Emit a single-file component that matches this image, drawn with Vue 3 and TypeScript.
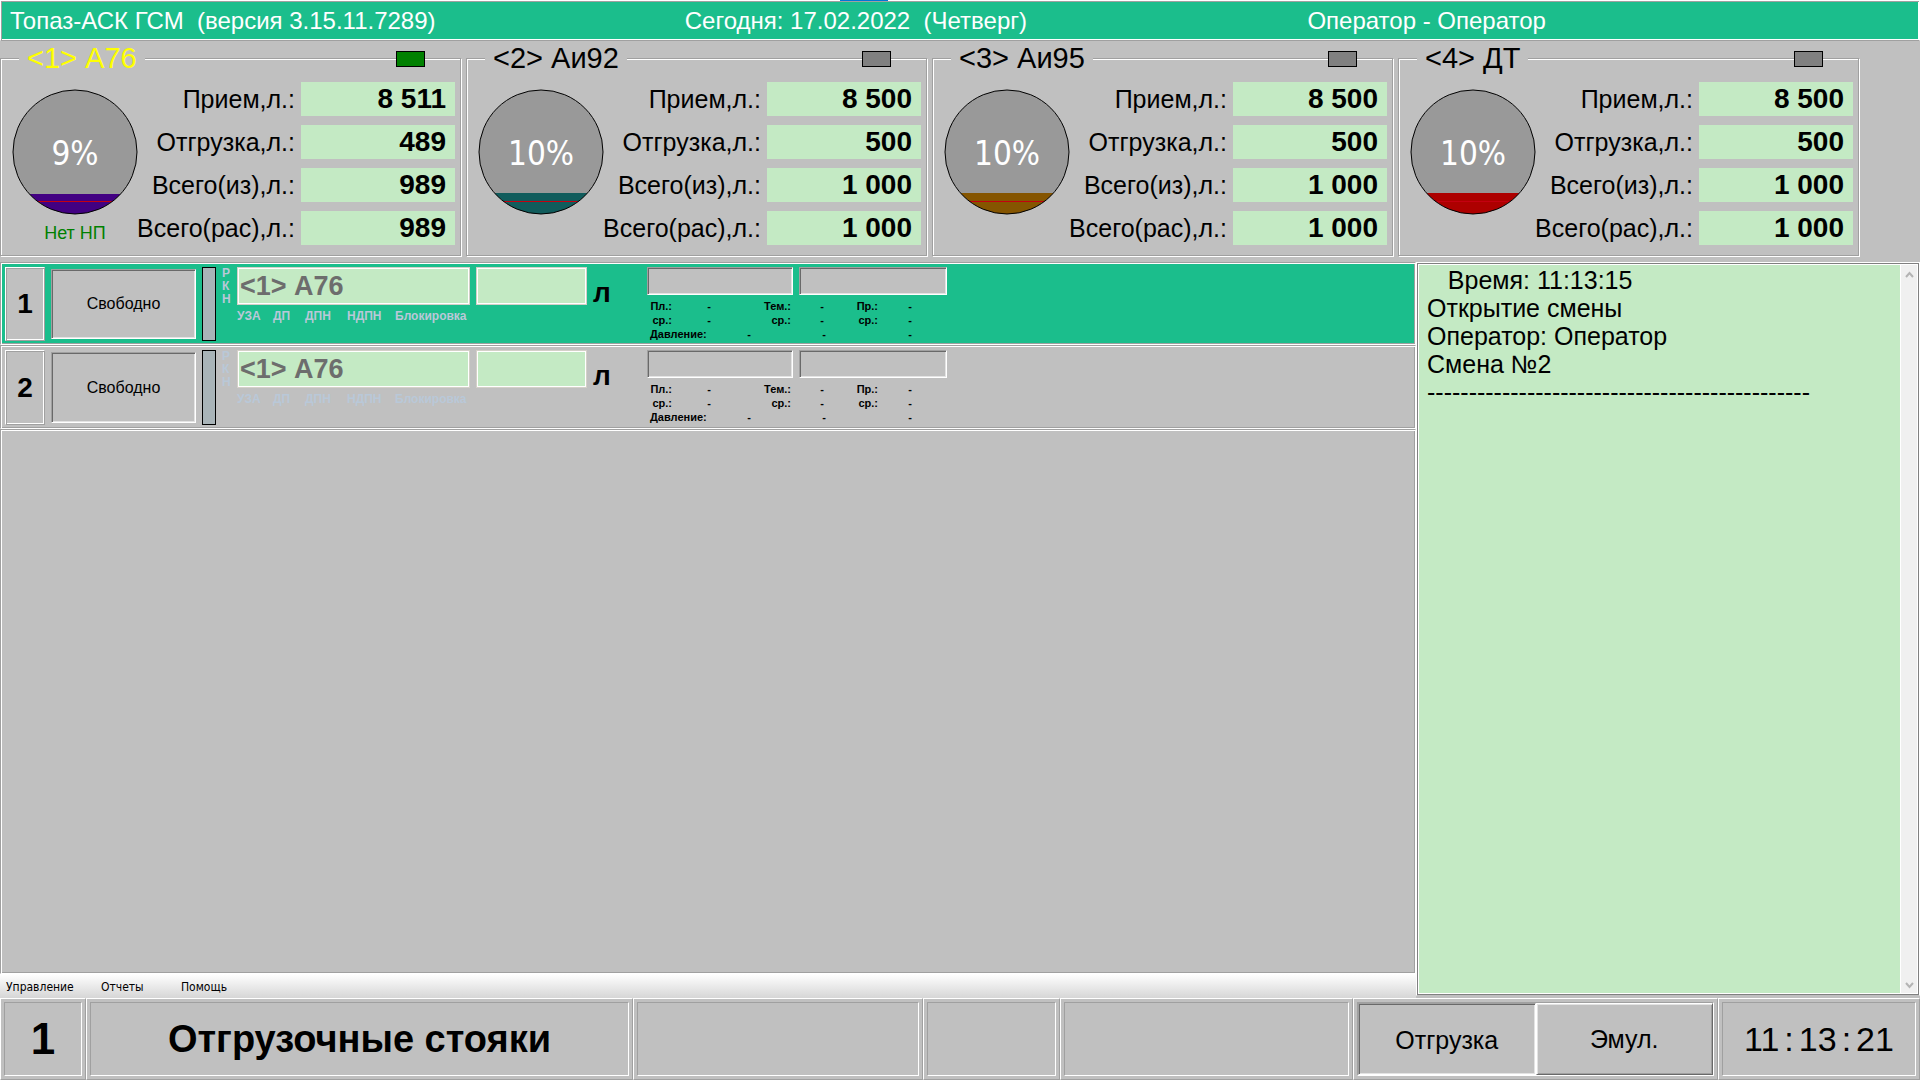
<script setup lang="ts">
interface Tank {
  id: number
  title: string
  active: boolean
  percent: string
  color: string
  surface: number
  note: string
  values: { label: string; value: string }[]
}

function makeTank(id: number, fuel: string, color: string, nums: string[], extra: Partial<Tank> = {}): Tank {
  const labels = ['Прием,л.:', 'Отгрузка,л.:', 'Всего(из),л.:', 'Всего(рас),л.:']
  return {
    id,
    title: `<${id}> ${fuel}`,
    active: false,
    percent: '10%',
    color,
    surface: 104,
    note: '',
    values: labels.map((label, i) => ({ label, value: nums[i] })),
    ...extra,
  }
}

const full = ['8 500', '500', '1 000', '1 000']
const tanks: Tank[] = [
  makeTank(1, 'А76', '#420082', ['8 511', '489', '989', '989'], {
    active: true,
    percent: '9%',
    surface: 105,
    note: 'Нет НП',
  }),
  makeTank(2, 'Аи92', '#105c5c', full),
  makeTank(3, 'Аи95', '#855500', full),
  makeTank(4, 'ДТ', '#ad0000', full),
]

const posts = [
  { id: 1, state: 'Свободно', product: '<1> А76', selected: true },
  { id: 2, state: 'Свободно', product: '<1> А76', selected: false },
]

const log = ['   Время: 11:13:15', 'Открытие смены', 'Оператор: Оператор', 'Смена №2', '-'.repeat(46)].join('\n')
</script>

<template>
  <div class="app">
    <header class="title">
      <i class="edge"></i>
      <span>Топаз-АСК ГСМ&nbsp; (версия 3.15.11.7289)</span>
      <span>Сегодня: 17.02.2022&nbsp; (Четверг)</span>
      <span>Оператор - Оператор</span>
    </header>

    <section class="tanks">
      <div v-for="t in tanks" :key="t.id" class="tank">
        <h2 class="legend" :class="{ on: t.active }">{{ t.title }}</h2>
        <i class="led" :class="{ on: t.active }"></i>
        <div class="gauge">
          <svg width="126" height="126" viewBox="0 0 126 126">
            <defs>
              <clipPath :id="'c' + t.id"><circle cx="63" cy="63" r="62" /></clipPath>
            </defs>
            <g :clip-path="`url(#c${t.id})`">
              <rect width="126" height="126" fill="#999" />
              <rect :y="t.surface" width="126" height="30" :fill="t.color" />
              <rect y="112" width="126" height="1" fill="#c40010" />
            </g>
            <circle cx="63" cy="63" r="62" fill="none" stroke="#000" />
          </svg>
          <span class="pct">{{ t.percent }}</span>
          <span class="note">{{ t.note }}</span>
        </div>
        <div class="figures">
          <template v-for="(v, i) in t.values" :key="i">
            <label :for="`t${t.id}-${i}`">{{ v.label }}</label>
            <input :id="`t${t.id}-${i}`" :value="v.value" readonly />
          </template>
        </div>
      </div>
    </section>

    <div class="middle">
      <main class="work">
        <article v-for="p in posts" :key="p.id" class="post etched" :class="{ selected: p.selected }">
          <div class="num">{{ p.id }}</div>
          <button class="state sunken">{{ p.state }}</button>
          <i class="bar"></i>
          <div class="rkn"><span>Р</span><span>К</span><span>Н</span></div>
          <div class="order">
            <div class="fields">
              <input class="product" :value="p.product" aria-label="Продукт" readonly />
              <input class="dose" value="" aria-label="Доза" />
            </div>
            <div class="flags">
              <span class="f1">УЗА</span><span class="f2">ДП</span><span class="f3">ДПН</span><span class="f4">НДПН</span><span>Блокировка</span>
            </div>
          </div>
          <span class="unit">л</span>
          <div class="meter">
            <div class="displays">
              <div class="sunken d1"></div>
              <div class="sunken d2"></div>
            </div>
            <div class="line"><b>Пл.:</b><i>-</i><b>Тем.:</b><i>-</i><b>Пр.:</b><i>-</i></div>
            <div class="line"><b>ср.:</b><i>-</i><b>ср.:</b><i>-</i><b>ср.:</b><i>-</i></div>
            <div class="line pressure"><b>Давление:</b><i>-</i><i>-</i><i>-</i></div>
          </div>
        </article>
        <div class="empty etched"></div>
        <nav class="menu">
          <button class="m1">Управление</button>
          <button class="m2">Отчеты</button>
          <button>Помощь</button>
        </nav>
      </main>

      <aside class="log">
        <textarea aria-label="Журнал" readonly :value="log"></textarea>
        <div class="scroll">
          <button aria-label="Вверх">
            <svg width="9" height="8" viewBox="0 0 9 8"><path d="M1 6l3.5-4L8 6" fill="none" stroke="#b4b4b4" stroke-width="2" /></svg>
          </button>
          <button aria-label="Вниз">
            <svg width="9" height="8" viewBox="0 0 9 8"><path d="M1 2l3.5 4L8 2" fill="none" stroke="#b4b4b4" stroke-width="2" /></svg>
          </button>
        </div>
      </aside>
    </div>

    <footer class="status">
      <div class="cell"><div class="well page">1</div></div>
      <div class="cell"><div class="well name">Отгрузочные стояки</div></div>
      <div class="cell"><div class="well"></div></div>
      <div class="cell"><div class="well"></div></div>
      <div class="cell"><div class="well"></div></div>
      <div class="cell">
        <div class="well modes">
          <button class="sunken pressed">Отгрузка</button>
          <button class="raised">Эмул.</button>
        </div>
      </div>
      <div class="cell">
        <time class="well clock"><span>11</span><span>:</span><span>13</span><span>:</span><span>21</span></time>
      </div>
    </footer>
  </div>
</template>

<style>
body {
  margin: 0;
  background: #c0c0c0;
}
</style>

<style scoped>
.app {
  display: flex;
  flex-direction: column;
  min-height: 100vh;
  background: #c0c0c0;
  color: #000;
  font-family: "Liberation Sans", Arial, sans-serif;
}
.app *,
.app *::before {
  box-sizing: border-box;
}
button,
input,
textarea {
  margin: 0;
  padding: 0;
  border: 0;
  border-radius: 0;
  background: none;
  color: inherit;
  font-family: inherit;
  outline: none;
}
i {
  font-style: normal;
}

/* Title strip */
.title {
  position: relative;
  display: grid;
  grid-template-columns: 673fr 621fr 610fr;
  align-items: center;
  height: 41px;
  padding-left: 9px;
  border: 1px solid #fff;
  border-bottom-color: #a0a0a0;
  background: #1bbe8c;
  box-shadow: inset 1px 1px #a0a0a0, inset -1px -1px #fff;
  color: #fff;
  font-size: 24px;
  line-height: 28px;
  white-space: nowrap;
}
.edge {
  position: absolute;
  top: -1px;
  left: 839px;
  width: 48px;
  height: 1px;
  background: #0078d7;
}

/* Tanks */
.tanks {
  display: flex;
  gap: 5px;
  padding: 17px 0 6px;
}
.tank {
  position: relative;
  display: flex;
  justify-content: space-between;
  width: 461px;
  height: 198px;
  padding: 23px 6px 0 11px;
  border: 1px solid #a0a0a0;
  box-shadow: inset 1px 1px #fff, 1px 1px #fff;
}
.legend {
  position: absolute;
  top: -17px;
  left: 18px;
  margin: 0;
  padding: 0 8px;
  background: #c0c0c0;
  font-size: 29px;
  font-weight: 400;
  line-height: 32px;
}
.legend.on {
  color: #ff0;
}
.led {
  position: absolute;
  top: -8px;
  left: 395px;
  width: 29px;
  height: 16px;
  border: 1px solid #000;
  background: #808080;
}
.led.on {
  background: #008000;
}
.gauge {
  position: relative;
  flex: none;
  width: 126px;
  padding-top: 7px;
  text-align: center;
}
.gauge svg {
  display: block;
}
.pct {
  position: absolute;
  inset: 52px 0 auto;
  color: #fff;
  font-family: "DejaVu Sans Condensed", "DejaVu Sans", sans-serif;
  font-size: 33px;
  line-height: 40px;
}
.note {
  display: block;
  margin-top: 7px;
  color: #008000;
  font-size: 18px;
  line-height: 22px;
}
.figures {
  display: grid;
  grid-template-columns: max-content 154px;
  grid-auto-rows: 34px;
  align-content: start;
  justify-content: end;
  gap: 9px 6px;
  width: 317px;
}
.figures label {
  justify-self: end;
  font-size: 25px;
  line-height: 34px;
  white-space: nowrap;
}
.figures input {
  width: 154px;
  padding-right: 9px;
  background: #c4eac4;
  font-size: 28px;
  font-weight: 700;
  text-align: right;
}

/* Bevels */
.etched {
  border: 1px solid #a0a0a0;
  border-bottom-color: #fff;
  border-right-color: #fff;
  box-shadow: inset 1px 1px #fff, inset -1px -1px #a0a0a0;
}
.sunken {
  border: 1px solid;
  border-color: #a0a0a0 #fff #fff #a0a0a0;
  box-shadow: inset 1px 1px #696969, inset -1px -1px #e3e3e3;
}
.raised {
  border: 1px solid;
  border-color: #fff #696969 #696969 #fff;
  box-shadow: inset 1px 1px #e3e3e3, inset -1px -1px #a0a0a0;
}

/* Loading posts */
.middle {
  display: flex;
  flex: 1;
}
.work {
  display: flex;
  flex: 1;
  flex-direction: column;
  min-width: 0;
}
.post {
  display: flex;
  min-height: 83px;
  padding: 4px 4px 3px;
}
.post + .post {
  min-height: 84px;
}
.post.selected {
  background: #1bbe8c;
}
.num {
  display: flex;
  align-items: center;
  justify-content: center;
  width: 40px;
  border: 1px solid;
  border-color: #fff #a0a0a0 #a0a0a0 #fff;
  background: #c0c0c0;
  box-shadow: inset 1px 1px #a0a0a0, inset -1px -1px #fff;
  font-size: 28px;
  font-weight: 700;
}
.state {
  width: 145px;
  margin: 2px 6px;
  background: #c0c0c0;
  font-size: 16px;
}
.bar {
  width: 14px;
  border: 1px solid #000;
  background: #a9b4b8;
}
.rkn {
  display: flex;
  flex-direction: column;
  width: 21px;
  padding-left: 6px;
  color: #b9c8d8;
  font-size: 12px;
  font-weight: 700;
  line-height: 13px;
}
.fields {
  display: flex;
  gap: 6px;
}
.fields input {
  height: 38px;
  border: 1px solid #d4d0c8;
  background: #c4eac4;
  box-shadow: inset 0 0 0 1px #fff;
  color: #6d6d6d;
  font-size: 27px;
  font-weight: 700;
}
.product {
  width: 233px;
  padding: 0 2px;
}
.dose {
  width: 111px;
}
.flags {
  display: flex;
  color: #b9c8d8;
  font-size: 12px;
  font-weight: 700;
  line-height: 14px;
  padding-top: 4px;
}
.f1 {
  width: 36px;
}
.f2 {
  width: 32px;
}
.f3 {
  width: 42px;
}
.f4 {
  width: 48px;
}
.unit {
  width: 60px;
  padding: 10px 0 0 6px;
  font-size: 28px;
  font-weight: 700;
  line-height: 32px;
}
.displays {
  display: flex;
  gap: 6px;
  margin-bottom: 4px;
}
.displays div {
  height: 28px;
  background: #c0c0c0;
}
.d1 {
  width: 146px;
}
.d2 {
  width: 148px;
}
.line {
  display: grid;
  grid-template-columns: 22px 74px 45px 62px 25px 64px;
  padding-left: 3px;
  font-size: 11px;
  font-weight: 700;
  line-height: 14px;
  white-space: nowrap;
}
.line b {
  text-align: right;
}
.line i {
  text-align: center;
}
.line.pressure {
  grid-template-columns: 61px 76px 74px 98px;
}
.line.pressure b {
  text-align: left;
}
.empty {
  flex: 1;
}
.menu {
  display: flex;
  height: 24px;
  background: linear-gradient(#fff, #d6d6d6);
}
.menu button {
  padding: 2px 6px 0;
  font-family: "DejaVu Sans Condensed", "DejaVu Sans", sans-serif;
  font-size: 12px;
  text-align: left;
}
.m1 {
  width: 95px;
}
.m2 {
  width: 80px;
}

/* Journal */
.log {
  display: flex;
  width: 504px;
  margin-bottom: 2px;
  border: 1px solid #fff;
  border-bottom-color: #c0c0c0;
  background: #c4eac4;
  box-shadow: inset 1px 1px #808080, inset -1px -1px #808080, inset 2px 2px #fff, inset -2px -2px #fff;
}
.log textarea {
  flex: 1;
  padding: 3px 0 0 10px;
  overflow: hidden;
  resize: none;
  font-size: 25px;
  line-height: 28px;
  white-space: pre;
}
.scroll {
  display: flex;
  flex-direction: column;
  justify-content: space-between;
  width: 17px;
  margin: 2px 2px 2px 0;
  border-left: 1px solid #fff;
  background: #f0f0f0;
}
.scroll button {
  height: 18px;
}

/* Status bar */
.status {
  display: grid;
  grid-template-columns: 86px 547fr 290fr 137fr 293fr 365px 202px;
  height: 82px;
}
.cell {
  padding: 3px;
  border: 1px solid;
  border-color: #fff #a0a0a0 #a0a0a0 #fff;
}
.well {
  display: flex;
  align-items: center;
  justify-content: center;
  height: 74px;
  border: 1px solid;
  border-color: #a0a0a0 #fff #fff #a0a0a0;
  white-space: nowrap;
}
.page {
  font-size: 44px;
  font-weight: 700;
}
.name {
  font-size: 38px;
  font-weight: 700;
}
.modes {
  align-items: stretch;
}
.modes button {
  flex: 1;
  font-size: 25px;
}
.modes .pressed {
  padding-top: 2px;
}
.clock {
  gap: 5px;
  font-size: 34px;
}
</style>
